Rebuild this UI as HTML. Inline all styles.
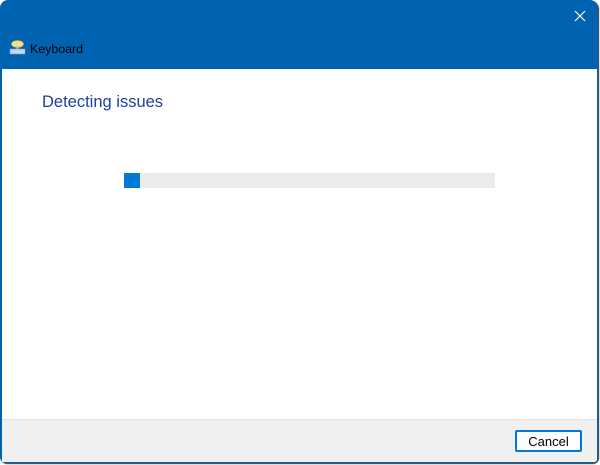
<!DOCTYPE html>
<html><head><style>
body{margin:0;width:600px;height:465px;background:#fff;position:relative;overflow:hidden;font-family:"Liberation Sans",sans-serif}
.win{position:absolute;left:0;top:0;width:598px;height:463px;background:#0063b1;border-radius:8px 8px 6px 6px;overflow:hidden;box-shadow:1px 1px 1px #333}
.content{position:absolute;left:2px;top:69px;width:595px;height:350px;background:#fff}
.footer{position:absolute;left:2px;top:419px;width:595px;height:42px;background:#f0f0f0;border-top:1px solid #e3e3e3}
.title{position:absolute;left:30px;top:42px;font-size:12.4px;color:#000}
.h{position:absolute;left:42px;top:93px;font-size:16.5px;color:#1f3f9f}
.bar{position:absolute;left:124px;top:173px;width:371px;height:15px;background:#ebebeb}
.fill{position:absolute;left:124px;top:173px;width:16px;height:15px;background:#0078d4}
.btn{position:absolute;left:515px;top:430px;width:67px;height:22px;box-sizing:border-box;border:2px solid #0078d4;background:#fdfdfd;font-size:13px;text-align:center;line-height:19px;color:#000;border-radius:2px}
</style></head><body>
<div class="win">
<svg style="position:absolute;left:9px;top:40px" width="17" height="15" viewBox="0 0 17 15"><ellipse cx="8.5" cy="4" rx="6" ry="3.5" fill="#f6dc8c" stroke="#c9a94e" stroke-width="0.6"/><rect x="7.5" y="6" width="2" height="3" fill="#b0c4de"/><rect x="1" y="9" width="15" height="5" fill="#c6d8f0" stroke="#7b9cc8" stroke-width="0.6"/></svg>
<div class="title">Keyboard</div>
<svg style="position:absolute;left:574px;top:10px" width="12" height="12" viewBox="0 0 12 12"><path d="M1 1L11 11M11 1L1 11" stroke="#fff" stroke-width="1.2"/></svg>
<div class="content"></div>
<div class="h">Detecting issues</div>
<div class="bar"></div><div class="fill"></div>
<div class="footer"></div>
<div class="btn">Cancel</div>
</div>
</body></html>
